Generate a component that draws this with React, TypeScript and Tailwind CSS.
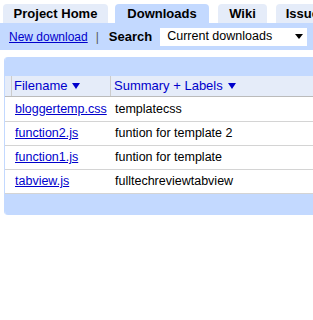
export default function App() {
    const rows = [
        { file: "bloggertemp.css", summary: "templatecss" },
        { file: "function2.js", summary: "funtion for template 2" },
        { file: "function1.js", summary: "funtion for template" },
        { file: "tabview.js", summary: "fulltechreviewtabview" },
    ];

    return (
        <div className="w-[313px] h-[320px] overflow-hidden bg-white font-['Liberation_Sans',Arial,sans-serif] text-[13px] text-black">
            {/* Tabs */}
            <div className="flex items-end pt-[4px] pl-[3px] w-[420px]">
                <div className="w-[105px] h-[19px] rounded-t-[4px] bg-[#e5ecf9] font-bold flex items-center justify-center">Project Home</div>
                <div className="ml-[7px] w-[94px] h-[19px] rounded-t-[4px] bg-[#c3d9ff] font-bold flex items-center justify-center">Downloads</div>
                <div className="ml-[9px] w-[49px] h-[19px] rounded-t-[4px] bg-[#e5ecf9] font-bold flex items-center justify-center">Wiki</div>
                <div className="ml-[9px] w-[60px] h-[19px] rounded-t-[4px] bg-[#e5ecf9] font-bold flex items-center justify-center">Issues</div>
            </div>

            {/* Sub bar */}
            <div className="h-[27px] bg-[#c3d9ff] flex items-center pl-[9px] w-[420px]">
                <a href="#" className="text-[#0000cc] underline text-[12px]">New download</a>
                <span className="ml-[8px] text-[#555] text-[12px]">|</span>
                <span className="ml-[10px] font-bold">Search</span>
                <div className="ml-[8px] w-[147px] h-[18px] bg-white flex items-center justify-between pl-[7px] pr-[4px] text-[12.5px]">
                    <span>Current downloads</span>
                    <svg width="8" height="5" viewBox="0 0 8 5"><path d="M0 0h8L4 5z" fill="#000" /></svg>
                </div>
            </div>

            {/* Table */}
            <div className="mt-[7px] ml-[4px] w-[420px] border-l border-[#c3d9ff] rounded-l-[4px] overflow-hidden">
                <div className="h-[19px] bg-[#c3d9ff]"></div>
                <div className="flex h-[21px] bg-[#e5ecf9] text-[#0000cc] border-b border-[#bbbbbb]">
                    <div className="w-[7px] border-r border-[#cccccc]"></div>
                    <div className="w-[99px] border-r border-[#cccccc] pl-[2px] flex items-center gap-[5px]">
                        Filename
                        <svg width="8" height="6" viewBox="0 0 8 6"><path d="M0 0h8L4 6z" fill="#0000cc" /></svg>
                    </div>
                    <div className="pl-[3px] flex items-center gap-[5px]">
                        Summary + Labels
                        <svg width="8" height="6" viewBox="0 0 8 6"><path d="M0 0h8L4 6z" fill="#0000cc" /></svg>
                    </div>
                </div>
                {rows.map((r, i) => (
                    <div key={r.file} className={"flex h-[24px] items-center bg-white text-[12.5px]" + (i > 0 ? " border-t border-[#d4d4d4]" : "")}>
                        <div className="w-[8px]"></div>
                        <div className="w-[99px] pl-[2px]">
                            <a href="#" className="text-[#0000cc] underline">{r.file}</a>
                        </div>
                        <div className="pl-[3px]">{r.summary}</div>
                    </div>
                ))}
                <div className="h-[22px] bg-[#c3d9ff] border-t border-[#d4d4d4]"></div>
            </div>
        </div>
    );
}
